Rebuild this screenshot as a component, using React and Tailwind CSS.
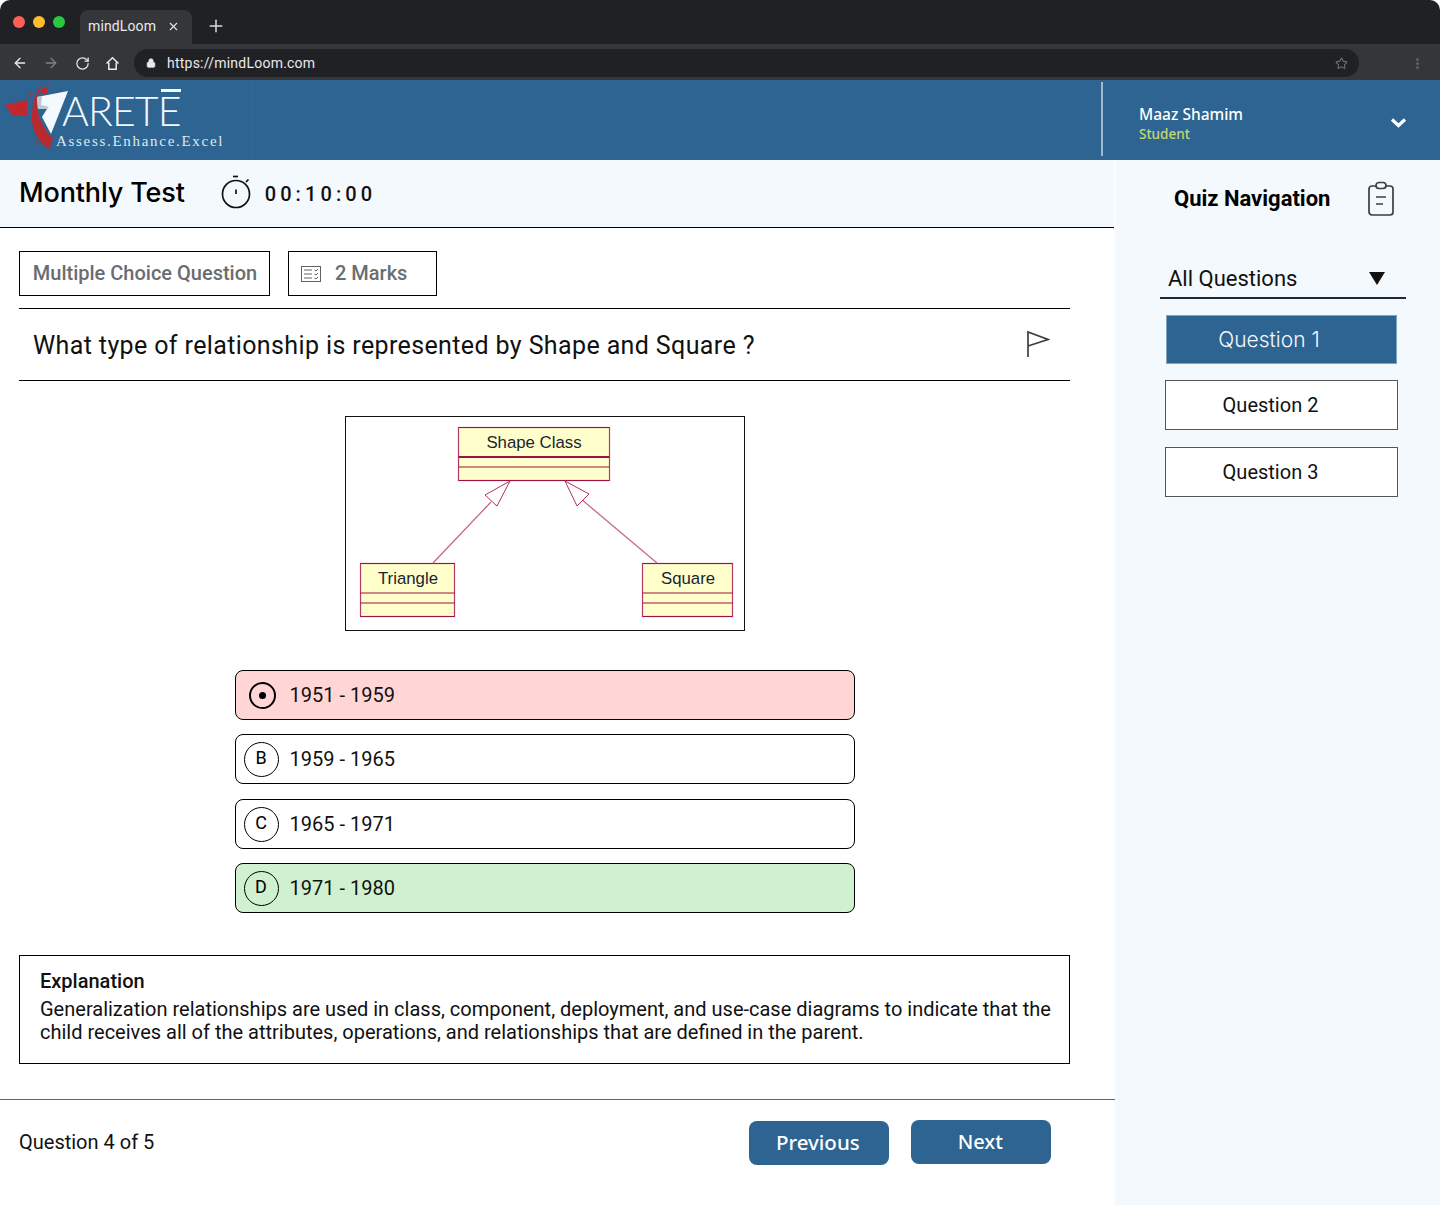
import React from 'react';
import { ArrowLeft, ArrowRight, RotateCw, Lock, Star, Plus, X } from 'lucide-react';

const roboto = "font-['Roboto',sans-serif]";

function BrowserChrome() {
  return (
    <div className="bg-[#202124] rounded-t-[10px]">
      <div className="h-[44px] flex items-end">
        <div className="flex gap-[8px] pl-[13px] pb-[16px]">
          <span className="w-3 h-3 rounded-full bg-[#ff5f57]" />
          <span className="w-3 h-3 rounded-full bg-[#febc2e]" />
          <span className="w-3 h-3 rounded-full bg-[#28c840]" />
        </div>
        <div className="ml-[15px] w-[112px] h-[34px] bg-[#35363a] rounded-t-[8px] flex items-center pl-[8px] pb-[2px] text-[#e8eaed] text-[14px] tracking-[0.12px] font-['Roboto',sans-serif]">
          <span>mindLoom</span>
          <X size={13} className="ml-[11px]" strokeWidth={2} />
        </div>
        <Plus size={20} className="ml-[14px] mb-[8px] text-[#dadce0]" strokeWidth={1.8} />
      </div>
      <div className="h-[36px] bg-[#35363a] flex items-center pl-[12px] pt-[2px]">
        <ArrowLeft size={16} className="text-[#e8eaed]" strokeWidth={2} />
        <ArrowRight size={16} className="ml-[15px] text-[#7f8184]" strokeWidth={2} />
        <RotateCw size={15} className="ml-[16px] text-[#e8eaed]" strokeWidth={2} />
        <svg width="15" height="15" viewBox="0 0 15 15" fill="none" stroke="#e8eaed" strokeWidth="1.5" className="ml-[15px]">
          <path d="M1.5 7.5 L7.5 1.8 L13.5 7.5 M3.8 6.5 V13.2 H11.2 V6.5" />
        </svg>
        <div className="ml-[14px] w-[1225px] h-[28px] bg-[#202124] rounded-full flex items-center pl-[12px] text-[#e8eaed] text-[14px] font-['Roboto',sans-serif] tracking-[0.23px]">
          <Lock size={10} fill="currentColor" strokeWidth={2} />
          <span className="ml-[11px]">https://mindLoom.com</span>
          <Star size={13} className="ml-auto mr-[11px] text-[#6f7175]" strokeWidth={2} />
        </div>
        <div className="ml-[57px] flex flex-col gap-[1px]">
          <span className="w-[3px] h-[3px] rounded-full bg-[#5f6165]" />
          <span className="w-[3px] h-[3px] rounded-full bg-[#5f6165]" />
          <span className="w-[3px] h-[3px] rounded-full bg-[#5f6165]" />
        </div>
      </div>
    </div>
  );
}

function LogoMark() {
  return (
    <svg width="70" height="72" viewBox="0 0 70 72" className="shrink-0">
      <path d="M5 24 L27 19 L27 35 L13 35 Z" fill="#c1272d" />
      <path d="M43 1 C33 14 30 34 33 46 C36 56 42 64 49 68 L53 58 C44 48 38 38 37 24 C37 16 39 8 43 1 Z" fill="#b92a30" />
      <path d="M35 57 L39 65" stroke="#b92a30" strokeWidth="0.8" />
      <circle cx="44" cy="10" r="3.4" fill="#c1272d" />
      <circle cx="31" cy="14" r="1.6" fill="#c1272d" />
      <circle cx="48" cy="3" r="0.9" fill="#c1272d" />
      <path d="M37 16 L68 10 L51 53 L42 36 L47 28 L38 28 Z" fill="#f4f9fe" />
      <path d="M37 16 L42 15 L41 24 L49 26 L47 28 L38 28 Z" fill="#bcc8d2" />
    </svg>
  );
}

function Header() {
  return (
    <div className="h-[80px] bg-[#2d6491] flex items-stretch">
      <div className="w-[252px] relative border-r border-[#2f6894] overflow-hidden">
        <div className="mt-[1px]"><LogoMark /></div>
        <span className="absolute left-[62px] top-[10px] text-[#f4f9fe] text-[41px] leading-[42px] tracking-[-0.9px] font-['Lato',sans-serif] font-light">ARET<span className="relative">E<span className="absolute left-[3px] right-[0px] top-[3px] h-[3px] bg-[#f4f9fe]" /></span></span>
        <span className="absolute left-[56px] top-[53px] text-[#dfe8ef] text-[15px] leading-[16px] tracking-[1.7px] font-['Liberation_Serif',serif]">Assess.Enhance.Excel</span>
      </div>
      <div className="ml-[849px] my-[2px] mb-[4px] w-[2px] bg-[#9fb9cd]" />
      <div className="ml-[36px] pt-[25px] font-['Noto_Sans',sans-serif]">
        <div className="text-white text-[15.5px] leading-[19px] font-medium">Maaz Shamim</div>
        <div className="text-[#c5da6b] text-[13.5px] leading-[20px] font-medium">Student</div>
      </div>
      <svg width="20" height="12" viewBox="0 0 20 12" className="ml-[146px] mt-[37px]">
        <path d="M3 2.5 L9.5 8.5 L16 2.5" fill="none" stroke="white" strokeWidth="3.2" />
      </svg>
    </div>
  );
}

function Stopwatch() {
  return (
    <svg width="30" height="36" viewBox="0 0 30 36" fill="none" stroke="#111" strokeWidth="1.7">
      <path d="M12 2.5 H17" />
      <circle cx="15" cy="20" r="13.5" />
      <path d="M15 15.5 V20" />
      <path d="M25 8 L27.5 5.5" />
    </svg>
  );
}

function MarksIcon() {
  return (
    <svg width="20" height="18" viewBox="0 0 20 18" fill="none" stroke="#5f6368" strokeWidth="1">
      <rect x="0.5" y="1.5" width="19" height="15" />
      <path d="M3 5 H11 M3 9 H11 M3 13 H11" />
      <path d="M13.5 5 L15 6 L17 4 M13.5 9 L15 10 L17 8 M13.5 13 L15 14 L17 12" />
    </svg>
  );
}

function Diagram() {
  const box = (x, y, w, h, mid1, mid2, label, tx) => (
    <g>
      <rect x={x} y={y} width={w} height={h} fill="#ffffcc" stroke="#b23a68" strokeWidth="1.2" />
      <path d={`M${x} ${y} H${x + w} M${x} ${y + h} H${x + w}`} stroke="#a01040" strokeWidth="1" />
      <path d={`M${x} ${mid1} H${x + w}`} stroke="#a01040" strokeWidth={x === 113.5 ? 1.8 : 1} />
      <path d={`M${x} ${mid2} H${x + w}`} stroke="#a01040" />
      <text x={tx} y={y + 20} textAnchor="middle" fontSize="16.8" fill="#1a2430" fontFamily="Liberation Sans, sans-serif">{label}</text>
    </g>
  );
  return (
    <svg width="400" height="215" viewBox="0 0 400 215" className="block">
      <rect x="0.5" y="0.5" width="399" height="214" fill="white" stroke="#111" />
      {box(113.5, 11.5, 151, 53, 41, 51, 'Shape Class', 189)}
      {box(15.5, 147.5, 94, 53, 177, 187, 'Triangle', 63)}
      {box(297.5, 147.5, 90, 53, 177, 187, 'Square', 343)}
      <path d="M88 147 L146 86" stroke="#c8668c" strokeWidth="1.3" fill="none" />
      <path d="M165 65 L140 79 L152 90 Z" fill="white" stroke="#b5305f" />
      <path d="M312 147 L236 83" stroke="#c8668c" strokeWidth="1.3" fill="none" />
      <path d="M220 65 L244 78 L232 90 Z" fill="white" stroke="#b5305f" />
    </svg>
  );
}

function Option({ letter, text, cls, mt }) {
  return (
    <div className={`w-[620px] h-[50px] rounded-[8px] border border-black flex items-center pl-[8px] ${cls} ${mt}`}>
      {letter ? (
        <span className="w-[35px] h-[35px] rounded-full border border-black flex items-center justify-center text-[18px] leading-none pb-[3px]">{letter}</span>
      ) : (
        <span className="ml-[5px] mr-[3px] w-[27px] h-[27px] rounded-full border-2 border-black flex items-center justify-center">
          <span className="w-[7px] h-[7px] rounded-full bg-black" />
        </span>
      )}
      <span className="ml-[11px] text-[20px] text-[#111]">{text}</span>
    </div>
  );
}

function Sidebar() {
  return (
    <aside className={`w-[325px] h-[1045px] bg-[#f4f9fe] ${roboto}`}>
      <div className="flex items-center pl-[59px] pt-[21px]">
        <span className="text-[22px] leading-[36px] font-bold text-black">Quiz Navigation</span>
        <svg width="28" height="36" viewBox="0 0 28 36" fill="none" stroke="#3b3f45" strokeWidth="1.7" className="ml-[37px]">
          <rect x="2" y="5" width="24" height="29" rx="3" />
          <rect x="9" y="1.5" width="10" height="6" rx="3" fill="#f4f9fe" />
          <path d="M9 16 H19 M9 23 H16" />
        </svg>
      </div>
      <div className="ml-[45px] mt-[43px] w-[246px] h-[39px] border-b-2 border-[#1b2b3a] flex items-center pl-[8px] pr-[21px] justify-between">
        <span className="text-[22px] text-[#111]">All Questions</span>
        <svg width="16" height="13" viewBox="0 0 16 13"><path d="M0 0 H16 L8 13 Z" fill="#111" /></svg>
      </div>
      <div className="ml-[51px] mt-[16px] w-[231px] h-[49px] bg-[#2d6491] border border-[#7ea3c0] flex items-center justify-center pr-[25px] text-[#f4f9fe] text-[21px] font-['Inter',sans-serif] font-light">Question 1</div>
      <div className="ml-[50px] mt-[16px] w-[233px] h-[50px] bg-white border border-[#555] flex items-center justify-center pr-[22px] text-[20px] text-[#111]">Question 2</div>
      <div className="ml-[50px] mt-[17px] w-[233px] h-[50px] bg-white border border-[#555] flex items-center justify-center pr-[22px] text-[20px] text-[#111]">Question 3</div>
    </aside>
  );
}

export default function App() {
  return (
    <div className={`w-[1440px] h-[1208px] bg-white overflow-hidden ${roboto}`}>
      <BrowserChrome />
      <Header />
      <div className="flex">
        <main className="w-[1115px] relative">
          <div className="h-[68px] mr-[1px] bg-[#f4f9fe] border-b border-black flex items-center pl-[19px]">
            <h1 className="text-[27px] font-['Inter',sans-serif] font-medium text-black tracking-[-0.15px] mt-[-1px]">Monthly Test</h1>
            <div className="ml-[36px] mt-[-3px]"><Stopwatch /></div>
            <span className="ml-[14px] text-[20px] font-medium tracking-[4.1px] text-[#111]">00:10:00</span>
          </div>

          <div className="px-[19px] pr-[45px]">
            <div className="flex gap-[18px] mt-[23px]">
              <div className="h-[45px] w-[251px] border border-black flex items-center justify-center pl-[1px] pb-[2px] text-[20px] font-medium text-[#696d72]">Multiple Choice Question</div>
              <div className="h-[45px] w-[149px] border border-black flex items-center pl-[12px] text-[20px] font-medium text-[#696d72]">
                <MarksIcon />
                <span className="ml-[14px] mb-[2px]">2 Marks</span>
              </div>
            </div>

            <div className="mt-[12px] h-[73px] border-y border-black flex items-center justify-between pl-[14px] pr-[20px]">
              <span className="text-[25px] tracking-[0.38px] mt-[2px] text-[#111]">What type of relationship is represented by Shape and Square ?</span>
              <svg width="24" height="28" viewBox="0 0 24 28" fill="none" stroke="#3b3f45" strokeWidth="1.7" className="mb-[2px]">
                <path d="M2 27 V2 L22 9.5 L2 16" />
              </svg>
            </div>

            <div className="mt-[35px] flex justify-center"><Diagram /></div>

            <div className="mt-[39px] flex flex-col items-center">
              <Option text="1951 - 1959" cls="bg-[#ffd5d5]" mt="" />
              <Option letter="B" text="1959 - 1965" cls="bg-white" mt="mt-[14px]" />
              <Option letter="C" text="1965 - 1971" cls="bg-white" mt="mt-[15px]" />
              <Option letter="D" text="1971 - 1980" cls="bg-[#d0f1d0]" mt="mt-[14px]" />
            </div>

            <div className="mt-[42px] h-[109px] border border-black pl-[20px] pr-[10px] pt-[14px] text-[20px] leading-[23px] text-[#111]">
              <div className="font-medium">Explanation</div>
              <div className="mt-[5px]">Generalization relationships are used in class, component, deployment, and use-case diagrams to indicate that the child receives all of the attributes, operations, and relationships that are defined in the parent.</div>
            </div>
          </div>

          <div className="mt-[35px] border-t border-[#666] h-[100px] flex items-start pl-[19px]">
            <span className="mt-[30px] text-[20px] leading-[24px] text-[#111]">Question 4 of 5</span>
            <button className="ml-[595px] mt-[21px] w-[140px] h-[44px] rounded-[8px] bg-[#2d6491] text-white text-[20.5px] font-medium font-['Noto_Sans',sans-serif] pr-[3px] pb-[2px]">Previous</button>
            <button className="ml-[22px] mt-[20px] w-[140px] h-[44px] rounded-[8px] bg-[#2d6491] text-white text-[20px] font-medium font-['Noto_Sans',sans-serif] pr-[2px]">Next</button>
          </div>
        </main>
        <Sidebar />
      </div>
    </div>
  );
}
